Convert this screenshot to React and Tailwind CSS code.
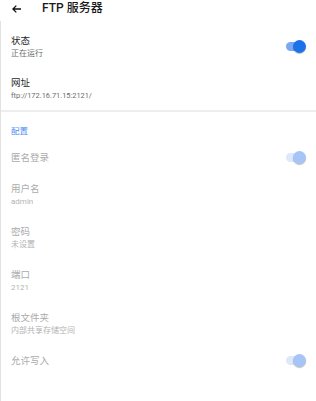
import React from "react";

function Toggle({ disabled }) {
  return (
    <div className="relative w-[20px] h-[14px] flex items-center">
      <div
        className={
          "absolute left-0 w-[17px] h-[9px] rounded-full " +
          (disabled ? "bg-[#dde8fb]" : "bg-[#7aa8f2]")
        }
      />
      <div
        className={
          "absolute right-0 w-[13px] h-[13px] rounded-full shadow-[0_1px_1px_rgba(0,0,0,0.25)] " +
          (disabled ? "bg-[#a6c4f6]" : "bg-[#1a73e8]")
        }
      />
    </div>
  );
}

function Row({ label, sub, subClass, h, disabled, toggle }) {
  return (
    <div className={"flex items-center pl-[10px] pr-[10px] " + h}>
      <div className="flex-1 flex flex-col">
        <div
          className={
            "text-[9.5px] leading-[13px] " +
            (disabled ? "text-[#ababab]" : "text-[#1f1f1f]")
          }
        >
          {label}
        </div>
        {sub && (
          <div
            className={
              (subClass || "text-[8px]") +
              " leading-[13px] " +
              (disabled ? "text-[#b3b3b3]" : "text-[#6b6b6b]")
            }
          >
            {sub}
          </div>
        )}
      </div>
      {toggle && <Toggle disabled={disabled} />}
    </div>
  );
}

export default function App() {
  return (
    <div
      className="w-[316px] h-[401px] bg-white overflow-hidden"
      style={{ fontFamily: 'Roboto, "Noto Sans CJK SC", sans-serif' }}
    >
      <div className="h-[21px] flex items-center">
        <div className="w-[42px] pl-[12px] flex items-center -mt-[3px]">
          <svg width="9" height="8" viewBox="0 0 9 8" fill="none">
            <path d="M9 4H1.2M4.3 0.6L0.9 4l3.4 3.4" stroke="#111" strokeWidth="1.3" />
          </svg>
        </div>
        <div className="text-[12px] leading-[14px] font-medium text-[#1a1a1a] -mt-[5px]">
          FTP 服务器
        </div>
      </div>
      <div className="border-l border-[#e2e2e2] h-[380px]">
        <div className="h-[4px]" />
        <Row label="状态" sub="正在运行" h="h-[43px]" toggle />
        <Row
          label="网址"
          sub="ftp://172.16.71.15:2121/"
          subClass="text-[7.4px]"
          h="h-[42px]"
        />
        <div className="h-[2px] bg-[#eeeeee]" />
        <div className="h-[30px] pl-[10px] pt-[13px]">
          <div className="text-[8.5px] leading-[12px] text-[#4f8ff5]">配置</div>
        </div>
        <Row label="匿名登录" h="h-[31px]" disabled toggle />
        <Row label="用户名" sub="admin" h="h-[43px]" disabled />
        <Row label="密码" sub="未设置" h="h-[43px]" disabled />
        <Row label="端口" sub="2121" h="h-[43px]" disabled />
        <Row label="根文件夹" sub="内部共享存储空间" h="h-[43px]" disabled />
        <Row label="允许写入" h="h-[31px]" disabled toggle />
      </div>
    </div>
  );
}
